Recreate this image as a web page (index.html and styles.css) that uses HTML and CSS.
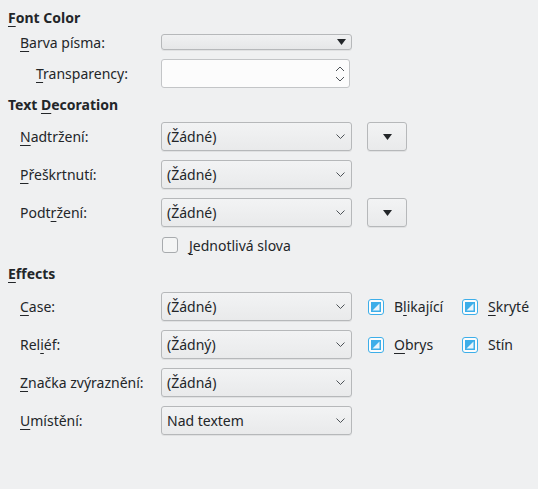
FILE: index.html
```html
<!DOCTYPE html>
<html>
<head>
<meta charset="utf-8">
<link rel="stylesheet" href="styles.css">
</head>
<body>
<div class="page">
  <div class="heading h1"><u>F</u>ont Color</div>
  <div class="row r-barva">
    <div class="label l1"><u>B</u>arva písma:</div>
    <div class="colorbtn"><svg class="tri" width="9" height="6" viewBox="0 0 9 6"><path d="M0 0H9L4.5 6Z" fill="#232629"/></svg></div>
  </div>
  <div class="row r-trans">
    <div class="label l2"><u>T</u>ransparency:</div>
    <div class="spin">
      <svg class="spinarr" width="10" height="18" viewBox="0 0 10 18"><path d="M1 6L5 2L9 6M1 12L5 16L9 12" fill="none" stroke="#4d5257" stroke-width="1"/></svg>
    </div>
  </div>

  <div class="heading h2">Text <u>D</u>ecoration</div>
  <div class="row deco">
    <div class="label l1"><u>N</u>adtržení:</div>
    <div class="combo"><span>(Žádné)</span><svg class="chev" width="9" height="5" viewBox="0 0 9 5"><path d="M0.5 0.5L4.5 4.5L8.5 0.5" fill="none" stroke="#4d5257"/></svg></div>
    <div class="smallbtn"><svg width="9" height="6" viewBox="0 0 9 6"><path d="M0 0H9L4.5 6Z" fill="#232629"/></svg></div>
  </div>
  <div class="row deco">
    <div class="label l1"><u>P</u>řeškrtnutí:</div>
    <div class="combo"><span>(Žádné)</span><svg class="chev" width="9" height="5" viewBox="0 0 9 5"><path d="M0.5 0.5L4.5 4.5L8.5 0.5" fill="none" stroke="#4d5257"/></svg></div>
  </div>
  <div class="row deco">
    <div class="label l1">Podt<u>r</u>žení:</div>
    <div class="combo"><span>(Žádné)</span><svg class="chev" width="9" height="5" viewBox="0 0 9 5"><path d="M0.5 0.5L4.5 4.5L8.5 0.5" fill="none" stroke="#4d5257"/></svg></div>
    <div class="smallbtn"><svg width="9" height="6" viewBox="0 0 9 6"><path d="M0 0H9L4.5 6Z" fill="#232629"/></svg></div>
  </div>
  <div class="row r-check">
    <span class="cb"></span><span class="cblabel"><u>J</u>ednotlivá slova</span>
  </div>

  <div class="heading h3"><u>E</u>ffects</div>
  <div class="row eff">
    <div class="label l1"><u>C</u>ase:</div>
    <div class="combo"><span>(Žádné)</span><svg class="chev" width="9" height="5" viewBox="0 0 9 5"><path d="M0.5 0.5L4.5 4.5L8.5 0.5" fill="none" stroke="#4d5257"/></svg></div>
    <div class="tri-check c1"><svg width="16" height="16" viewBox="0 0 16 16"><rect x="0.5" y="0.5" width="15" height="15" rx="2.5" fill="#fcfcfc" stroke="#3daee9"/><rect x="3" y="3" width="10" height="10" fill="#3daee9"/><path d="M4.5 11.5H11.5V4.5Z" fill="#e9f5fc"/></svg><span>B<u>l</u>ikající</span></div>
    <div class="tri-check"><svg width="16" height="16" viewBox="0 0 16 16"><rect x="0.5" y="0.5" width="15" height="15" rx="2.5" fill="#fcfcfc" stroke="#3daee9"/><rect x="3" y="3" width="10" height="10" fill="#3daee9"/><path d="M4.5 11.5H11.5V4.5Z" fill="#e9f5fc"/></svg><span><u>S</u>kryté</span></div>
  </div>
  <div class="row eff">
    <div class="label l1">Rel<u>i</u>éf:</div>
    <div class="combo"><span>(Žádný)</span><svg class="chev" width="9" height="5" viewBox="0 0 9 5"><path d="M0.5 0.5L4.5 4.5L8.5 0.5" fill="none" stroke="#4d5257"/></svg></div>
    <div class="tri-check c1"><svg width="16" height="16" viewBox="0 0 16 16"><rect x="0.5" y="0.5" width="15" height="15" rx="2.5" fill="#fcfcfc" stroke="#3daee9"/><rect x="3" y="3" width="10" height="10" fill="#3daee9"/><path d="M4.5 11.5H11.5V4.5Z" fill="#e9f5fc"/></svg><span><u>O</u>brys</span></div>
    <div class="tri-check"><svg width="16" height="16" viewBox="0 0 16 16"><rect x="0.5" y="0.5" width="15" height="15" rx="2.5" fill="#fcfcfc" stroke="#3daee9"/><rect x="3" y="3" width="10" height="10" fill="#3daee9"/><path d="M4.5 11.5H11.5V4.5Z" fill="#e9f5fc"/></svg><span>Stín</span></div>
  </div>
  <div class="row eff">
    <div class="label l1"><u>Z</u>načka zvýraznění:</div>
    <div class="combo"><span>(Žádná)</span><svg class="chev" width="9" height="5" viewBox="0 0 9 5"><path d="M0.5 0.5L4.5 4.5L8.5 0.5" fill="none" stroke="#4d5257"/></svg></div>
  </div>
  <div class="row eff">
    <div class="label l1"><u>U</u>místění:</div>
    <div class="combo"><span>Nad textem</span><svg class="chev" width="9" height="5" viewBox="0 0 9 5"><path d="M0.5 0.5L4.5 4.5L8.5 0.5" fill="none" stroke="#4d5257"/></svg></div>
  </div>
</div>
</body>
</html>
```

FILE: styles.css
```css
html, body {
  margin: 0;
  padding: 0;
  background: #eff0f1;
}
.page {
  font-family: "Noto Sans", "Open Sans", sans-serif;
  font-size: 14px;
  color: #232629;
  padding: 9px 0 0 8px;
  width: 530px;
  height: 480px;
}
u {
  text-decoration: underline;
  text-decoration-thickness: 1px;
  text-underline-offset: 3px;
}
.heading {
  font-weight: bold;
  height: 18px;
  line-height: 18px;
}
.row {
  display: flex;
  align-items: center;
}
.r-barva { height: 24px; margin-top: 3px; }
.r-trans { height: 29px; margin-top: 5px; }
.h2 { margin-top: 8px; }
.deco { height: 29px; margin-top: 9px; }
.h2 + .deco { margin-top: 8px; }
.r-check { height: 16px; margin-top: 10px; padding-left: 154px; }
.h3 { margin-top: 12px; }
.eff { height: 29px; margin-top: 9px; }
.h3 + .eff { margin-top: 9px; }

.label { flex: none; white-space: nowrap; }
.l1 { width: 141px; padding-left: 12px; }
.l2 { width: 125px; padding-left: 28px; }

.colorbtn {
  width: 187px;
  height: 14px;
  border: 1px solid #b6b8ba;
  border-radius: 3px;
  background: linear-gradient(#f0f1f2, #e6e7e8);
  box-shadow: 0 1px 0 rgba(0,0,0,0.06);
  display: flex;
  align-items: center;
  justify-content: flex-end;
  padding-right: 2px;
}
.colorbtn .tri { margin-right: 3px; }
.spin {
  width: 187px;
  height: 27px;
  border: 1px solid #c3c5c7;
  border-radius: 3px;
  background: #fcfcfc;
  display: flex;
  align-items: center;
  justify-content: flex-end;
}
.spinarr { margin-right: 4px; }
.combo {
  width: 178px;
  height: 27px;
  border: 1px solid #b6b8ba;
  border-radius: 3px;
  background: linear-gradient(#f2f3f4, #e9eaeb);
  box-shadow: 0 1px 0 rgba(0,0,0,0.06);
  display: flex;
  align-items: center;
  justify-content: space-between;
  padding: 0 6px 0 5px;
  box-sizing: content-box;
  flex: none;
}
.chev { flex: none; }
.smallbtn {
  margin-left: 15px;
  width: 38px;
  height: 27px;
  border: 1px solid #b6b8ba;
  border-radius: 3px;
  background: linear-gradient(#f2f3f4, #e9eaeb);
  box-shadow: 0 1px 0 rgba(0,0,0,0.06);
  display: flex;
  align-items: center;
  justify-content: center;
}
.cb {
  width: 14px;
  height: 14px;
  border: 1px solid #a8abae;
  border-radius: 3px;
  background: #f4f5f5;
  flex: none;
}
.cblabel { margin-left: 11px; }
.tri-check {
  display: flex;
  align-items: center;
  flex: none;
}
.tri-check svg { flex: none; }
.tri-check span { margin-left: 10px; }
.c1 { margin-left: 16px; width: 94px; }
```
